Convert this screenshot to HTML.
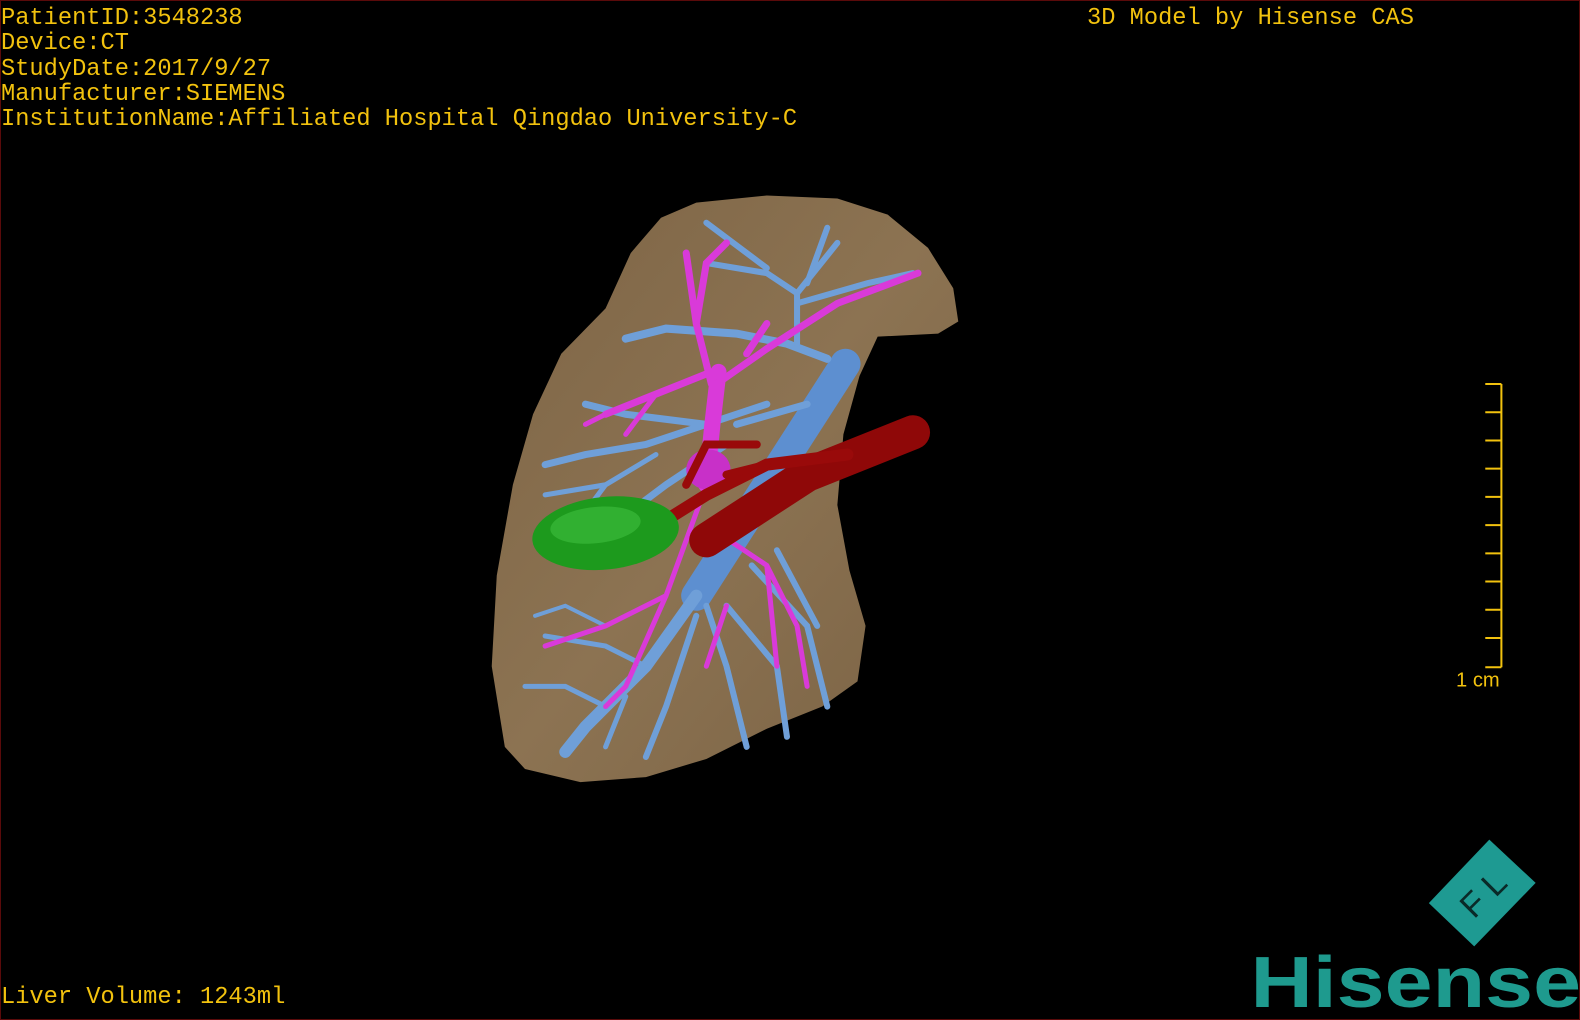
<!DOCTYPE html>
<html><head><meta charset="utf-8"><style>
html,body{margin:0;padding:0;background:#000;}
#w{position:relative;width:1580px;height:1020px;background:#000;overflow:hidden;box-sizing:border-box;border:1px solid #5a0a0a;}
.t{position:absolute;font-family:"Liberation Mono",monospace;font-size:23.7px;color:#f2c20e;white-space:pre;line-height:25.3px;}
</style></head><body><div id="w">
<svg width="1580" height="1020" viewBox="0 0 1568 1012" preserveAspectRatio="none" style="position:absolute;left:0;top:0">
<defs><linearGradient id="lv" x1="0" y1="0" x2="1" y2="1"><stop offset="0" stop-color="#7d6445"/><stop offset="0.5" stop-color="#8c7352"/><stop offset="1" stop-color="#7a6244"/></linearGradient></defs>
<path d="M690 200 L760 193 L830 196 L880 212 L920 245 L945 285 L950 318 L930 330 L870 333 L852 372 L836 430 L830 500 L842 565 L858 620 L850 675 L815 700 L760 722 L700 752 L640 770 L575 775 L520 762 L500 740 L487 660 L492 570 L508 480 L528 410 L556 350 L600 305 L625 250 L655 215 Z" fill="url(#lv)"/>
<g fill="none" stroke="#6f9fd8" stroke-linecap="round">
<path d="M838 360 L690 590" stroke-width="30" stroke="#5d8fd0"/>
<path d="M690 590 L640 660 L580 720 L560 745" stroke-width="12"/>
<path d="M820 355 L780 340 L730 330 L660 325 L620 335" stroke-width="8"/>
<path d="M790 340 L790 290 L830 240 M790 290 L760 270 L700 260 M790 300 L860 280 L905 270 M700 220 L760 265 M820 225 L800 280" stroke-width="6"/>
<path d="M760 400 L700 420 L640 440 L580 450 L540 460 M700 420 L620 410 L580 400" stroke-width="7"/>
<path d="M720 440 L660 480 L620 510 M800 400 L730 420" stroke-width="7"/>
<path d="M650 450 L600 480 L540 490 M600 480 L570 520" stroke-width="5"/>
<path d="M700 600 L720 660 L740 740 M720 600 L770 660 L780 730 M745 560 L800 620 L820 700 M770 545 L810 620 M690 610 L660 700 L640 750" stroke-width="6"/>
<path d="M640 660 L600 640 L540 630 M600 700 L560 680 L520 680 M620 690 L600 740" stroke-width="5"/>
<path d="M600 620 L560 600 L530 610" stroke-width="4"/>
</g>
<g fill="none" stroke="#d93ad9" stroke-linecap="round">
<path d="M712 368 L706 420 L700 480" stroke-width="16"/>
<path d="M705 380 L690 320 L700 260 L720 240 M690 320 L680 250 M700 370 L650 390 L600 410 M710 380 L760 345 L830 300 L910 270 M740 350 L760 320" stroke-width="7"/>
<path d="M650 390 L620 430 M600 410 L580 420 M700 480 L660 590 L600 620 L540 640 M660 590 L620 680 L600 700 M700 520 L760 560 L790 620 L800 680 M760 560 L770 660 M720 600 L700 660" stroke-width="5"/>
</g>
<ellipse cx="702" cy="465" rx="22" ry="20" fill="#c830c8"/>
<g fill="none" stroke="#990a0a" stroke-linecap="round">
<path d="M905 428 L800 470 L700 535" stroke-width="34" stroke="#8f0808"/>
<path d="M840 450 L760 460 L700 490 L660 515" stroke-width="12"/>
<path d="M750 440 L700 440 L680 480 M760 460 L720 470" stroke-width="8"/>
</g>
<ellipse cx="600" cy="528" rx="73" ry="36" transform="rotate(-6 600 528)" fill="#1d9a1d"/>
<ellipse cx="590" cy="520" rx="45" ry="18" transform="rotate(-6 590 520)" fill="#3fc03f" opacity="0.6"/>
<g stroke="#f2c20e" stroke-width="2">
<line x1="1489" y1="380" x2="1489" y2="661"/>
<line x1="1473" y1="380" x2="1489" y2="380"/><line x1="1473" y1="408" x2="1489" y2="408"/><line x1="1473" y1="436" x2="1489" y2="436"/><line x1="1473" y1="464" x2="1489" y2="464"/><line x1="1473" y1="492" x2="1489" y2="492"/><line x1="1473" y1="520" x2="1489" y2="520"/><line x1="1473" y1="548" x2="1489" y2="548"/><line x1="1473" y1="576" x2="1489" y2="576"/><line x1="1473" y1="604" x2="1489" y2="604"/><line x1="1473" y1="632" x2="1489" y2="632"/><line x1="1473" y1="661" x2="1489" y2="661"/>
</g>
<text x="1444" y="680" font-family="Liberation Sans,sans-serif" font-size="20" fill="#f2c20e">1 cm</text>
<polygon points="1477,832 1523,875 1462,938 1417,895" fill="#1e9a92"/>
<text x="1470" y="898" text-anchor="middle" transform="rotate(-45 1470 885)" font-family="Liberation Sans,sans-serif" font-size="34" fill="#0a2a28">F L</text>
<text x="1240" y="998" font-family="Liberation Sans,sans-serif" font-weight="bold" font-size="72" fill="#1e9a8e" textLength="328" lengthAdjust="spacingAndGlyphs">Hisense</text>
</svg>
<div class="t" style="left:0;top:5px">PatientID:3548238
Device:CT
StudyDate:2017/9/27
Manufacturer:SIEMENS
InstitutionName:Affiliated Hospital Qingdao University-C</div>
<div class="t" style="left:1086px;top:5px">3D Model by Hisense CAS</div>
<div class="t" style="left:0;top:984px">Liver Volume: 1243ml</div>
</div></body></html>
